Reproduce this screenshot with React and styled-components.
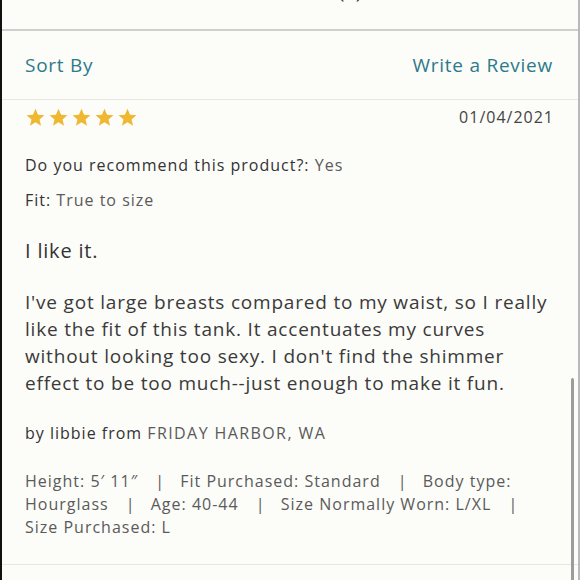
import React from "react";
import styled, { createGlobalStyle } from "styled-components";

const GlobalStyle = createGlobalStyle`
  html, body {
    margin: 0;
    padding: 0;
    background: #fcfcf9;
  }
  body {
    font-family: "Open Sans", "Noto Sans", "Liberation Sans", sans-serif;
    color: #333;
  }
`;

const Screen = styled.div`
  position: relative;
  height: 580px;
  overflow: hidden;
  background: #fcfcf9;
  border-left: 2px solid #111;
  border-right: 2px solid #b9b9b9;
  box-sizing: border-box;
`;

const TitleBar = styled.div`
  height: 29px;
  display: flex;
  justify-content: center;
  overflow: hidden;
  border-bottom: 2px solid #cfcfcf;
`;

const Title = styled.div`
  margin-top: -19px;
  padding-left: 40px;
  font-size: 20px;
  line-height: 20px;
  color: #333;
`;

const Toolbar = styled.div`
  height: 69px;
  display: flex;
  align-items: center;
  justify-content: space-between;
  padding: 0 25px 0 23px;
  box-sizing: border-box;
  border-bottom: 1px solid #e6e6e3;
`;

const LinkText = styled.a`
  font-size: 19px;
  color: #2c7a8b;
  text-decoration: none;
  letter-spacing: 0.75px;
  cursor: pointer;
`;

const Review = styled.div`
  padding: 6px 25px 0 23px;
  border-bottom: 1px solid #e6e6e3;
  height: 458px;
`;

const TopRow = styled.div`
  display: flex;
  align-items: center;
  justify-content: space-between;
`;

const Stars = styled.div`
  display: flex;
  gap: 4px;
  padding-left: 1px;
`;

const Date = styled.span`
  font-size: 16px;
  color: #444;
  letter-spacing: 1px;
  margin-right: -1px;
`;

const Meta = styled.div`
  font-size: 16px;
  line-height: 20px;
  margin-top: ${(p) => p.$top}px;
  color: #333;
  letter-spacing: 1px;
`;

const Value = styled.span`
  color: #5a5a5a;
  letter-spacing: ${(p) => (p.$wide ? "1.4px" : "inherit")};
`;

const Headline = styled.div`
  margin-top: 29px;
  font-size: 20px;
  line-height: 24px;
  color: #333;
  letter-spacing: 0.8px;
`;

const Body = styled.p`
  margin: 26px 0 0;
  font-size: 19px;
  line-height: 27px;
  color: #3a3a3a;
  letter-spacing: 0.8px;
`;

const Attributes = styled.div`
  margin-top: 27px;
  font-size: 16px;
  line-height: 23px;
  color: #5a5a5a;
  letter-spacing: 1px;
`;

const Sep = styled.span`
  margin: 0 10px 0 12px;
`;

const Scrollbar = styled.div`
  position: absolute;
  right: 4px;
  top: 378px;
  bottom: -4px;
  width: 3px;
  border-radius: 2px;
  background: #9c9c9c;
`;

function Star() {
  return (
    <svg width="19" height="19" viewBox="0 0 24 24">
      <path
        d="M12 1l3.2 7.4 8 .7-6.1 5.3 1.9 7.9L12 18.1 5 22.3l1.9-7.9L.8 9.1l8-.7z"
        fill="#f0b732"
      />
    </svg>
  );
}

const attrs = [
  "Height: 5\u2032 11\u2033",
  "Fit Purchased: Standard",
  "Body type: Hourglass",
  "Age: 40-44",
  "Size Normally Worn: L/XL",
  "Size Purchased: L",
];

export default function App() {
  return (
    <>
      <GlobalStyle />
      <Screen>
        <TitleBar>
          <Title>Reviews (1)</Title>
        </TitleBar>
        <Toolbar>
          <LinkText>Sort By</LinkText>
          <LinkText>Write a Review</LinkText>
        </Toolbar>
        <Review>
          <TopRow>
            <Stars>
              {[0, 1, 2, 3, 4].map((i) => (
                <Star key={i} />
              ))}
            </Stars>
            <Date>01/04/2021</Date>
          </TopRow>
          <Meta $top={27}>
            Do you recommend this product?: <Value>Yes</Value>
          </Meta>
          <Meta $top={15}>
            Fit: <Value>True to size</Value>
          </Meta>
          <Headline>I like it.</Headline>
          <Body>
            I've got large breasts compared to my waist, so I really like the
            fit of this tank. It accentuates my curves without looking too
            sexy. I don't find the shimmer effect to be too much--just enough
            to make it fun.
          </Body>
          <Meta $top={26}>
            by libbie from <Value $wide>FRIDAY HARBOR, WA</Value>
          </Meta>
          <Attributes>
            {attrs.map((a, i) => (
              <React.Fragment key={a}>
                {a}
                {i < attrs.length - 1 && (
                  <>
                    {" "}
                    <Sep>|</Sep>{" "}
                  </>
                )}
              </React.Fragment>
            ))}
          </Attributes>
        </Review>
        <Scrollbar />
      </Screen>
    </>
  );
}
